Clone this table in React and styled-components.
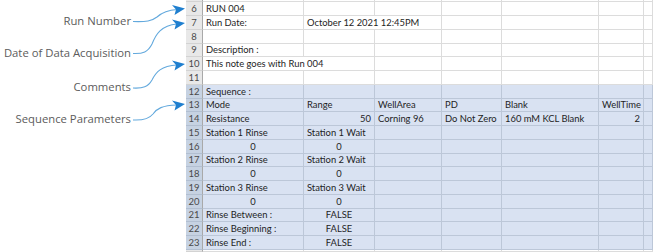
import React from "react";
import styled, { createGlobalStyle } from "styled-components";

const Global = createGlobalStyle`
  html, body { margin: 0; padding: 0; background: #fff; }
  body { width: 653px; height: 252px; overflow: hidden; }
`;

const Page = styled.div`
  display: flex;
  width: 653px;
  height: 252px;
  overflow: hidden;
`;

const Annotations = styled.div`
  position: relative;
  width: 186px;
  flex: none;
  display: flex;
  flex-direction: column;
  align-items: flex-end;
  padding: 14px 55px 0 0;
  box-sizing: border-box;
`;

const Label = styled.div`
  margin-top: ${(p) => p.$gap}px;
  height: 14px;
  line-height: 14px;
  font-family: "Open Sans", "Noto Sans", sans-serif;
  font-size: 11.3px;
  color: #5c5c5c;
  white-space: nowrap;
`;

const Arrows = styled.svg`
  position: absolute;
  left: 0;
  top: 0;
  width: 186px;
  height: 252px;
  overflow: visible;
`;

const Sheet = styled.div`
  flex: 1;
  display: grid;
  grid-template-columns: 17px 101px 71px 67px 60px 97px 45px 1fr;
  grid-template-rows: 2px repeat(4, 14px 14px 14px 13px) 14px 14px 1fr;
  font-family: "Lato", "Liberation Sans", sans-serif;
  font-size: 9.4px;
  color: #1e1e1e;
`;

const RowHead = styled.div`
  box-sizing: border-box;
  background: ${(p) => (p.$blue ? "#c6d2e2" : "#e8e8e8")};
  border-bottom: 1px solid ${(p) => (p.$blue ? "#b2bfd1" : "#d3d3d3")};
  border-right: 1px solid #a9a9a9;
  color: #4a4a4a;
  display: flex;
  align-items: flex-end;
  justify-content: center;
  padding-bottom: 1px;
  font-size: 9.5px;
  line-height: 11px;
`;

const Cell = styled.div`
  box-sizing: border-box;
  grid-column: span ${(p) => p.$span || 1};
  background: ${(p) => (p.$blue ? "#d9e2f2" : "#ffffff")};
  border-bottom: 1px solid ${(p) => (p.$blue ? "#bcc7d8" : "#dcdcdc")};
  border-right: 1px solid ${(p) => (p.$blue ? "#bcc7d8" : "#dcdcdc")};
  display: flex;
  align-items: flex-end;
  justify-content: ${(p) =>
    p.$align === "right" ? "flex-end" : p.$align === "center" ? "center" : "flex-start"};
  padding: 0 3px 1px 3px;
  white-space: nowrap;
  overflow: visible;
  line-height: 11px;
  min-width: 0;
`;

const COLS = 7;

const rows = [
  { n: 6, cells: [{ t: "RUN 004" }] },
  { n: 7, cells: [{ t: "Run Date:" }, { t: "October 12 2021 12:45PM", span: 2 }] },
  { n: 8, cells: [] },
  { n: 9, cells: [{ t: "Description :" }] },
  { n: 10, cells: [{ t: "This note goes with Run 004", span: 2 }] },
  { n: 11, cells: [] },
  { n: 12, blue: true, cells: [{ t: "Sequence :" }] },
  {
    n: 13,
    blue: true,
    cells: [{ t: "Mode" }, { t: "Range" }, { t: "WellArea" }, { t: "PD" }, { t: "Blank" }, { t: "WellTime" }],
  },
  {
    n: 14,
    blue: true,
    cells: [
      { t: "Resistance" },
      { t: "50", a: "right" },
      { t: "Corning 96" },
      { t: "Do Not Zero" },
      { t: "160 mM KCL Blank" },
      { t: "2", a: "right" },
    ],
  },
  { n: 15, blue: true, cells: [{ t: "Station 1 Rinse" }, { t: "Station 1 Wait" }] },
  { n: 16, blue: true, cells: [{ t: "0", a: "center" }, { t: "0", a: "center" }] },
  { n: 17, blue: true, cells: [{ t: "Station 2 Rinse" }, { t: "Station 2 Wait" }] },
  { n: 18, blue: true, cells: [{ t: "0", a: "center" }, { t: "0", a: "center" }] },
  { n: 19, blue: true, cells: [{ t: "Station 3 Rinse" }, { t: "Station 3 Wait" }] },
  { n: 20, blue: true, cells: [{ t: "0", a: "center" }, { t: "0", a: "center" }] },
  { n: 21, blue: true, cells: [{ t: "Rinse Between :" }, { t: "FALSE", a: "center" }] },
  { n: 22, blue: true, cells: [{ t: "Rinse Beginning :" }, { t: "FALSE", a: "center" }] },
  { n: 23, blue: true, cells: [{ t: "Rinse End :" }, { t: "FALSE", a: "center" }] },
];

function fill(cells) {
  const out = [...cells];
  let used = out.reduce((s, c) => s + (c.span || 1), 0);
  while (used < COLS) {
    out.push({ t: "" });
    used++;
  }
  return out;
}

function SheetRow({ row }) {
  return (
    <>
      <RowHead $blue={row.blue}>{row.n}</RowHead>
      {fill(row.cells).map((c, i) => (
        <Cell key={i} $blue={row.blue} $span={c.span} $align={c.a}>
          {c.t}
        </Cell>
      ))}
    </>
  );
}

function EdgeRow() {
  return (
    <>
      <RowHead />
      {Array.from({ length: COLS }).map((_, i) => (
        <Cell key={i} />
      ))}
    </>
  );
}

const STROKE = "#63a9dd";
const HEAD = "#1f7fcf";

function Arrow({ d, tip }) {
  const [x, y] = tip;
  return (
    <g>
      <path d={d} fill="none" stroke={STROKE} strokeWidth="1.1" />
      <polygon
        points={`${x},${y} ${x - 13},${y - 3.5} ${x - 9},${y + 1} ${x - 10.5},${y + 6.5}`}
        fill={HEAD}
      />
    </g>
  );
}

export default function App() {
  return (
    <>
      <Global />
      <Page>
        <Annotations>
          <Label $gap={0}>Run Number</Label>
          <Label $gap={18}>Date of Data Acquisition</Label>
          <Label $gap={20}>Comments</Label>
          <Label $gap={18}>Sequence Parameters</Label>
          <Arrows viewBox="0 0 186 252">
            <Arrow d="M133 21.5 C146 22, 152 21, 157 17 C162 12.5, 167 10, 177 9.5" tip={[185, 8.5]} />
            <Arrow d="M133 53.5 C143 54, 148 52, 152 44 C156 34, 161 25.5, 177 24" tip={[185, 23]} />
            <Arrow d="M133 88 C143 88.5, 148 87, 152 80 C156 72, 161 66, 177 65" tip={[185, 64]} />
            <Arrow d="M133 120 C143 120.5, 149 119, 153 114 C157 108.5, 162 105.5, 177 105" tip={[185, 104]} />
          </Arrows>
        </Annotations>
        <Sheet>
          <EdgeRow />
          {rows.map((r) => (
            <SheetRow key={r.n} row={r} />
          ))}
          <EdgeRow />
        </Sheet>
      </Page>
    </>
  );
}
